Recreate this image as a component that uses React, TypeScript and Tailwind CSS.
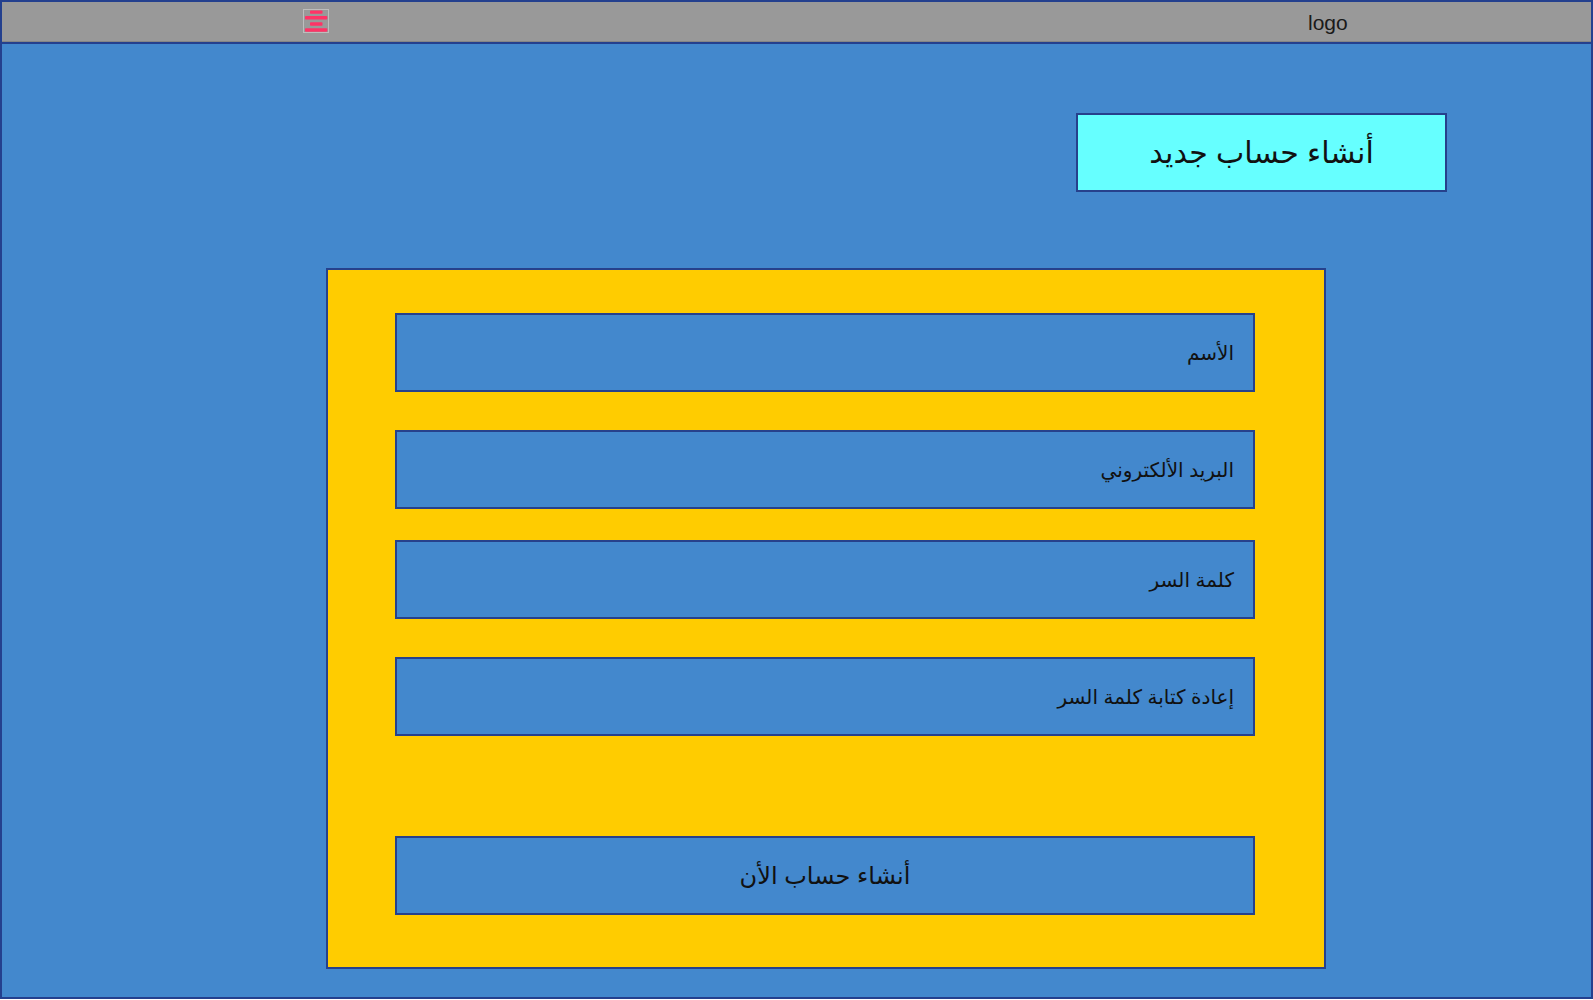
const fields = ["الأسم", "البريد الألكتروني", "كلمة السر", "إعادة كتابة كلمة السر"]

const fieldGaps = ["mt-0", "mt-[38px]", "mt-[31px]", "mt-[38px]"]

const MenuIcon = () => {
    return (
        <div className="w-[26px] h-[24px] border border-[#bdbdbd] box-border">
            <svg width="24" height="22" viewBox="0 0 24 22">
                <rect x="6" y="0.5" width="12.5" height="3.3" rx="0.8" fill="#ff3366" />
                <rect x="1" y="6" width="22.3" height="3.5" rx="0.8" fill="#ff3366" />
                <rect x="6" y="12.2" width="12.5" height="3.5" rx="0.8" fill="#ff3366" />
                <rect x="1" y="18.2" width="22.3" height="3.5" rx="0.8" fill="#ff3366" />
            </svg>
        </div>
    )
}

const Field = ({ label, gap }: { label: string, gap: string }) => {
    return (
        <div
            dir="rtl"
            className={`${gap} w-[860px] h-[79px] border-2 border-[#26418c] bg-[#4388cd] flex items-center pr-[19px] text-[20px] text-[#111]`}
        >
            {label}
        </div>
    )
}

export default function App() {
    return (
        <div
            className="w-full h-[999px] border-2 border-[#24408e] bg-[#4388cd] flex flex-col"
            style={{ fontFamily: '"Liberation Sans", "DejaVu Sans", Arial, sans-serif' }}
        >
            <header className="h-[42px] shrink-0 border-b-2 border-[#24408e]">
                <div className="h-[40px] bg-[#999999] border-b border-[#858585] flex items-center">
                    <div className="ml-[301px] -mt-[2px]">
                        <MenuIcon />
                    </div>
                    <span className="ml-[979px] mt-[3px] text-[21px] text-[#1a1a1a]">logo</span>
                </div>
            </header>

            <main className="flex-1 flex flex-col">
                <div className="flex justify-end pr-[144px] pt-[69px]">
                    <div
                        dir="rtl"
                        className="w-[371px] h-[79px] border-2 border-[#26418c] bg-[#66ffff] flex items-center justify-center text-[30px] text-[#111]"
                    >
                        أنشاء حساب جديد
                    </div>
                </div>

                <div className="ml-[324px] mt-[76px] w-[1000px] h-[701px] border-2 border-[#26418c] bg-[#ffcc00] pl-[67px] pt-[43px]">
                    {fields.map((f, i) => (
                        <Field key={f} label={f} gap={fieldGaps[i]} />
                    ))}
                    <button
                        dir="rtl"
                        className="mt-[100px] w-[860px] h-[79px] border-2 border-[#26418c] bg-[#4388cd] flex items-center justify-center text-[24px] text-[#111]"
                    >
                        أنشاء حساب الأن
                    </button>
                </div>
            </main>
        </div>
    )
}
